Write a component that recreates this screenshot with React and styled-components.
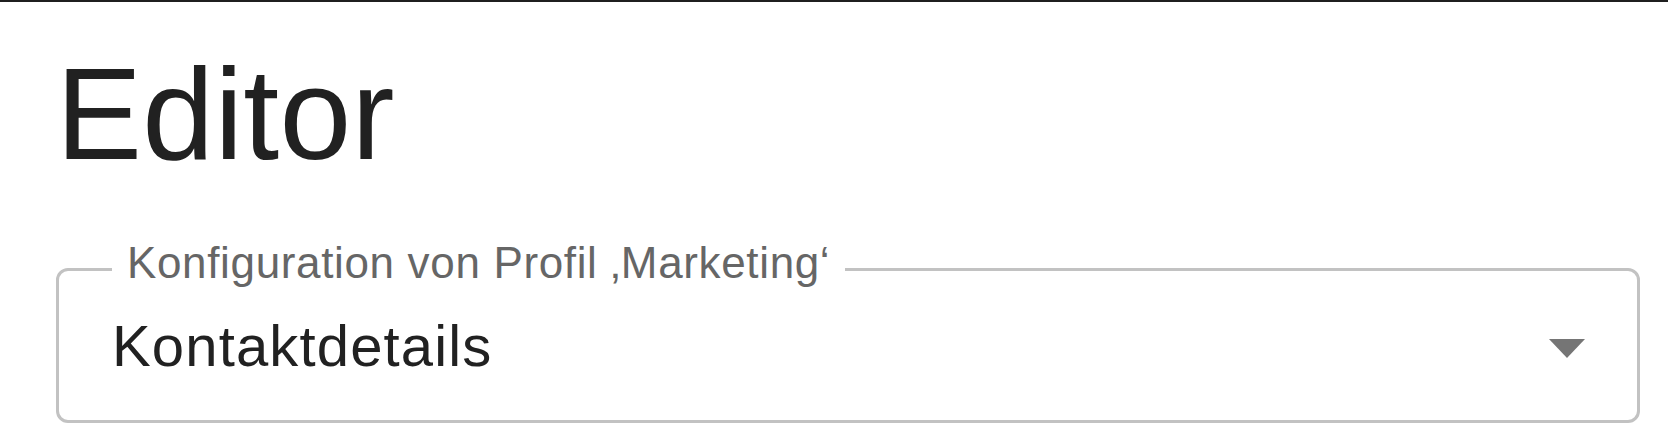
import React from "react";
import styled, { createGlobalStyle } from "styled-components";

const GlobalStyle = createGlobalStyle`
  html, body {
    margin: 0;
    padding: 0;
    background: #ffffff;
  }
  body {
    font-family: "Liberation Sans", Arial, Helvetica, sans-serif;
  }
  * {
    box-sizing: border-box;
  }
`;

const Page = styled.main`
  border-top: 2px solid #1f1f1f;
  padding: 48px 28px 0 56px;
  min-height: 438px;
`;

const Title = styled.h1`
  margin: 0;
  font-size: 129px;
  line-height: 1;
  font-weight: 400;
  letter-spacing: 0.3px;
  color: #212121;
`;

const Field = styled.div`
  margin-top: 89px;
`;

const SelectBox = styled.div`
  position: relative;
  height: 155px;
  border: 3px solid #c2c2c2;
  border-radius: 12px;
  display: flex;
  align-items: center;
  justify-content: space-between;
  padding: 0 52px 0 53px;
`;

const FloatingLabel = styled.label`
  position: absolute;
  top: -30px;
  left: 53px;
  padding: 0 15px 0 15px;
  background: #ffffff;
  font-size: 44px;
  line-height: 1;
  letter-spacing: 0.65px;
  color: #666666;
  white-space: nowrap;
`;

const Value = styled.span`
  font-size: 58px;
  line-height: 1;
  letter-spacing: 1.15px;
  color: #212121;
  white-space: nowrap;
`;

const Arrow = styled.svg`
  display: block;
  width: 36px;
  height: 19px;
  flex: none;
  margin-top: 6px;
`;

export default function App() {
  return (
    <>
      <GlobalStyle />
      <Page>
        <Title>Editor</Title>
        <Field>
          <SelectBox role="combobox" aria-expanded="false">
            <FloatingLabel>Konfiguration von Profil ‚Marketing‘</FloatingLabel>
            <Value>Kontaktdetails</Value>
            <Arrow viewBox="0 0 36 19" aria-hidden="true">
              <polygon points="0,0 36,0 18,19" fill="#757575" />
            </Arrow>
          </SelectBox>
        </Field>
      </Page>
    </>
  );
}
